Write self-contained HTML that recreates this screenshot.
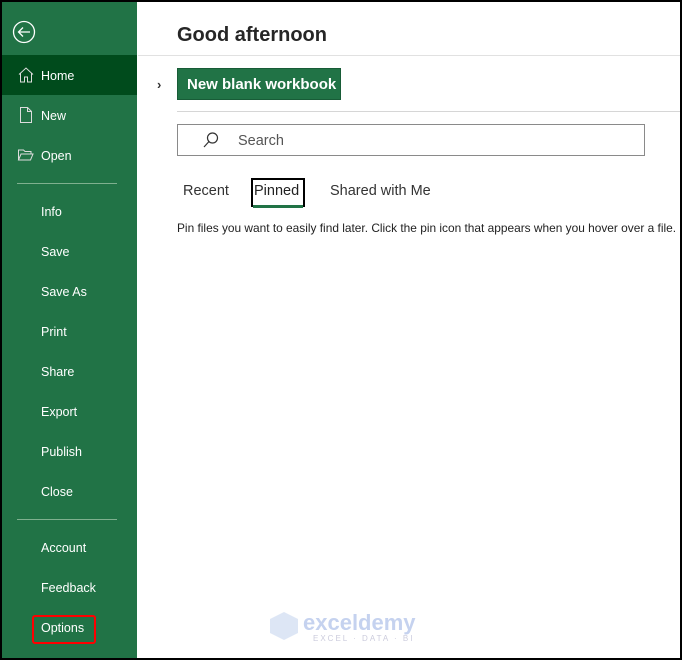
<!DOCTYPE html>
<html><head><style>
*{margin:0;padding:0;box-sizing:border-box}
body{width:682px;height:660px;background:#000;position:relative;overflow:hidden;font-family:"Liberation Sans",sans-serif}
#main{position:absolute;left:2px;top:2px;width:678px;height:656px;background:#fff}
#side{position:absolute;left:2px;top:2px;width:135px;height:656px;background:#217346;color:#fff}
.it{position:absolute;left:39px;font-size:12.5px;line-height:16px}
.ic{position:absolute;left:15px}
.sep{position:absolute;left:15px;width:100px;height:1px;background:#7fb08f}
.abs{position:absolute}
</style></head><body>
<div id="main"></div>
<div id="side">
 <svg class="abs" style="left:10px;top:18px" width="24" height="24" viewBox="0 0 24 24"><circle cx="12" cy="12" r="10.5" fill="none" stroke="#fff" stroke-width="1.3"/><path d="M18 12H6.5M11 7.5L6.5 12 11 16.5" fill="none" stroke="#fff" stroke-width="1.3"/></svg>
 <div class="abs" style="left:0;top:53px;width:135px;height:40px;background:#004b1c"></div>
 <svg class="ic" style="top:64px" width="18" height="18" viewBox="0 0 18 18"><path d="M2 8.5L9 2l7 6.5M3.5 7v9h4v-5h3v5h4V7" fill="none" stroke="#ddd" stroke-width="1"/></svg>
 <div class="it" style="top:66px">Home</div>
 <svg class="ic" style="top:104px" width="18" height="18" viewBox="0 0 18 18"><path d="M3.5 1.5h7l4 4v11h-11z M10.5 1.5v4h4" fill="none" stroke="#ddd" stroke-width="1"/></svg>
 <div class="it" style="top:106px">New</div>
 <svg class="ic" style="top:145px" width="18" height="16" viewBox="0 0 18 16"><path d="M1.5 13V3h5l1.5 1.5h6V7 M1.5 13l2.5-6h12l-2.5 6z" fill="none" stroke="#ddd" stroke-width="1"/></svg>
 <div class="it" style="top:146px">Open</div>
 <div class="sep" style="top:181px"></div>
 <div class="it" style="top:202px">Info</div>
 <div class="it" style="top:242px">Save</div>
 <div class="it" style="top:282px">Save As</div>
 <div class="it" style="top:322px">Print</div>
 <div class="it" style="top:362px">Share</div>
 <div class="it" style="top:402px">Export</div>
 <div class="it" style="top:442px">Publish</div>
 <div class="it" style="top:482px">Close</div>
 <div class="sep" style="top:517px"></div>
 <div class="it" style="top:538px">Account</div>
 <div class="it" style="top:578px">Feedback</div>
 <div class="it" style="top:618px">Options</div>
 <div class="abs" style="left:30px;top:613px;width:64px;height:29px;border:2px solid #f00;border-radius:3px"></div>
</div>
<div class="abs" style="left:177px;top:24px;font-size:20px;font-weight:bold;color:#262626">Good afternoon</div>
<div class="abs" style="left:138px;top:55px;width:542px;height:1px;background:#e1e1e1"></div>
<div class="abs" style="left:157px;top:77px;font-size:13px;color:#333;font-weight:bold">›</div>
<div class="abs" style="left:177px;top:68px;width:164px;height:32px;background:#217346;border:1px solid #185c37;color:#fff;font-size:15px;font-weight:bold;line-height:32px;padding-left:9px">New blank workbook</div>
<div class="abs" style="left:177px;top:111px;width:503px;height:1px;background:#d6d6d6"></div>
<div class="abs" style="left:177px;top:124px;width:468px;height:32px;border:1px solid #8a8a8a"></div>
<svg class="abs" style="left:202px;top:131px" width="18" height="18" viewBox="0 0 18 18"><circle cx="10.5" cy="7" r="5" fill="none" stroke="#333" stroke-width="1.2"/><path d="M7 10.5L2 16" stroke="#333" stroke-width="1.2"/></svg>
<div class="abs" style="left:238px;top:133px;font-size:14.5px;color:#555">Search</div>
<div class="abs" style="left:183px;top:183px;font-size:14.5px;color:#333">Recent</div>
<div class="abs" style="left:251px;top:178px;width:54px;height:29px;border:2px solid #000"></div>
<div class="abs" style="left:254px;top:183px;font-size:14.5px;color:#222">Pinned</div>
<div class="abs" style="left:253px;top:205px;width:50px;height:3px;background:#217346"></div>
<div class="abs" style="left:330px;top:183px;font-size:14.5px;color:#333">Shared with Me</div>
<div class="abs" style="left:177px;top:221px;font-size:11.9px;color:#222;white-space:nowrap">Pin files you want to easily find later. Click the pin icon that appears when you hover over a file.</div>
<div class="abs" style="left:270px;top:612px;width:28px;height:28px;background:#dde6f5;clip-path:polygon(50% 0,100% 25%,100% 75%,50% 100%,0 75%,0 25%)"></div>
<div class="abs" style="left:303px;top:610px;font-size:22px;font-weight:bold;color:#c5d2ef">exceldemy</div>
<div class="abs" style="left:313px;top:634px;font-size:8px;color:#ccd;letter-spacing:2px">EXCEL · DATA · BI</div>
</body></html>
